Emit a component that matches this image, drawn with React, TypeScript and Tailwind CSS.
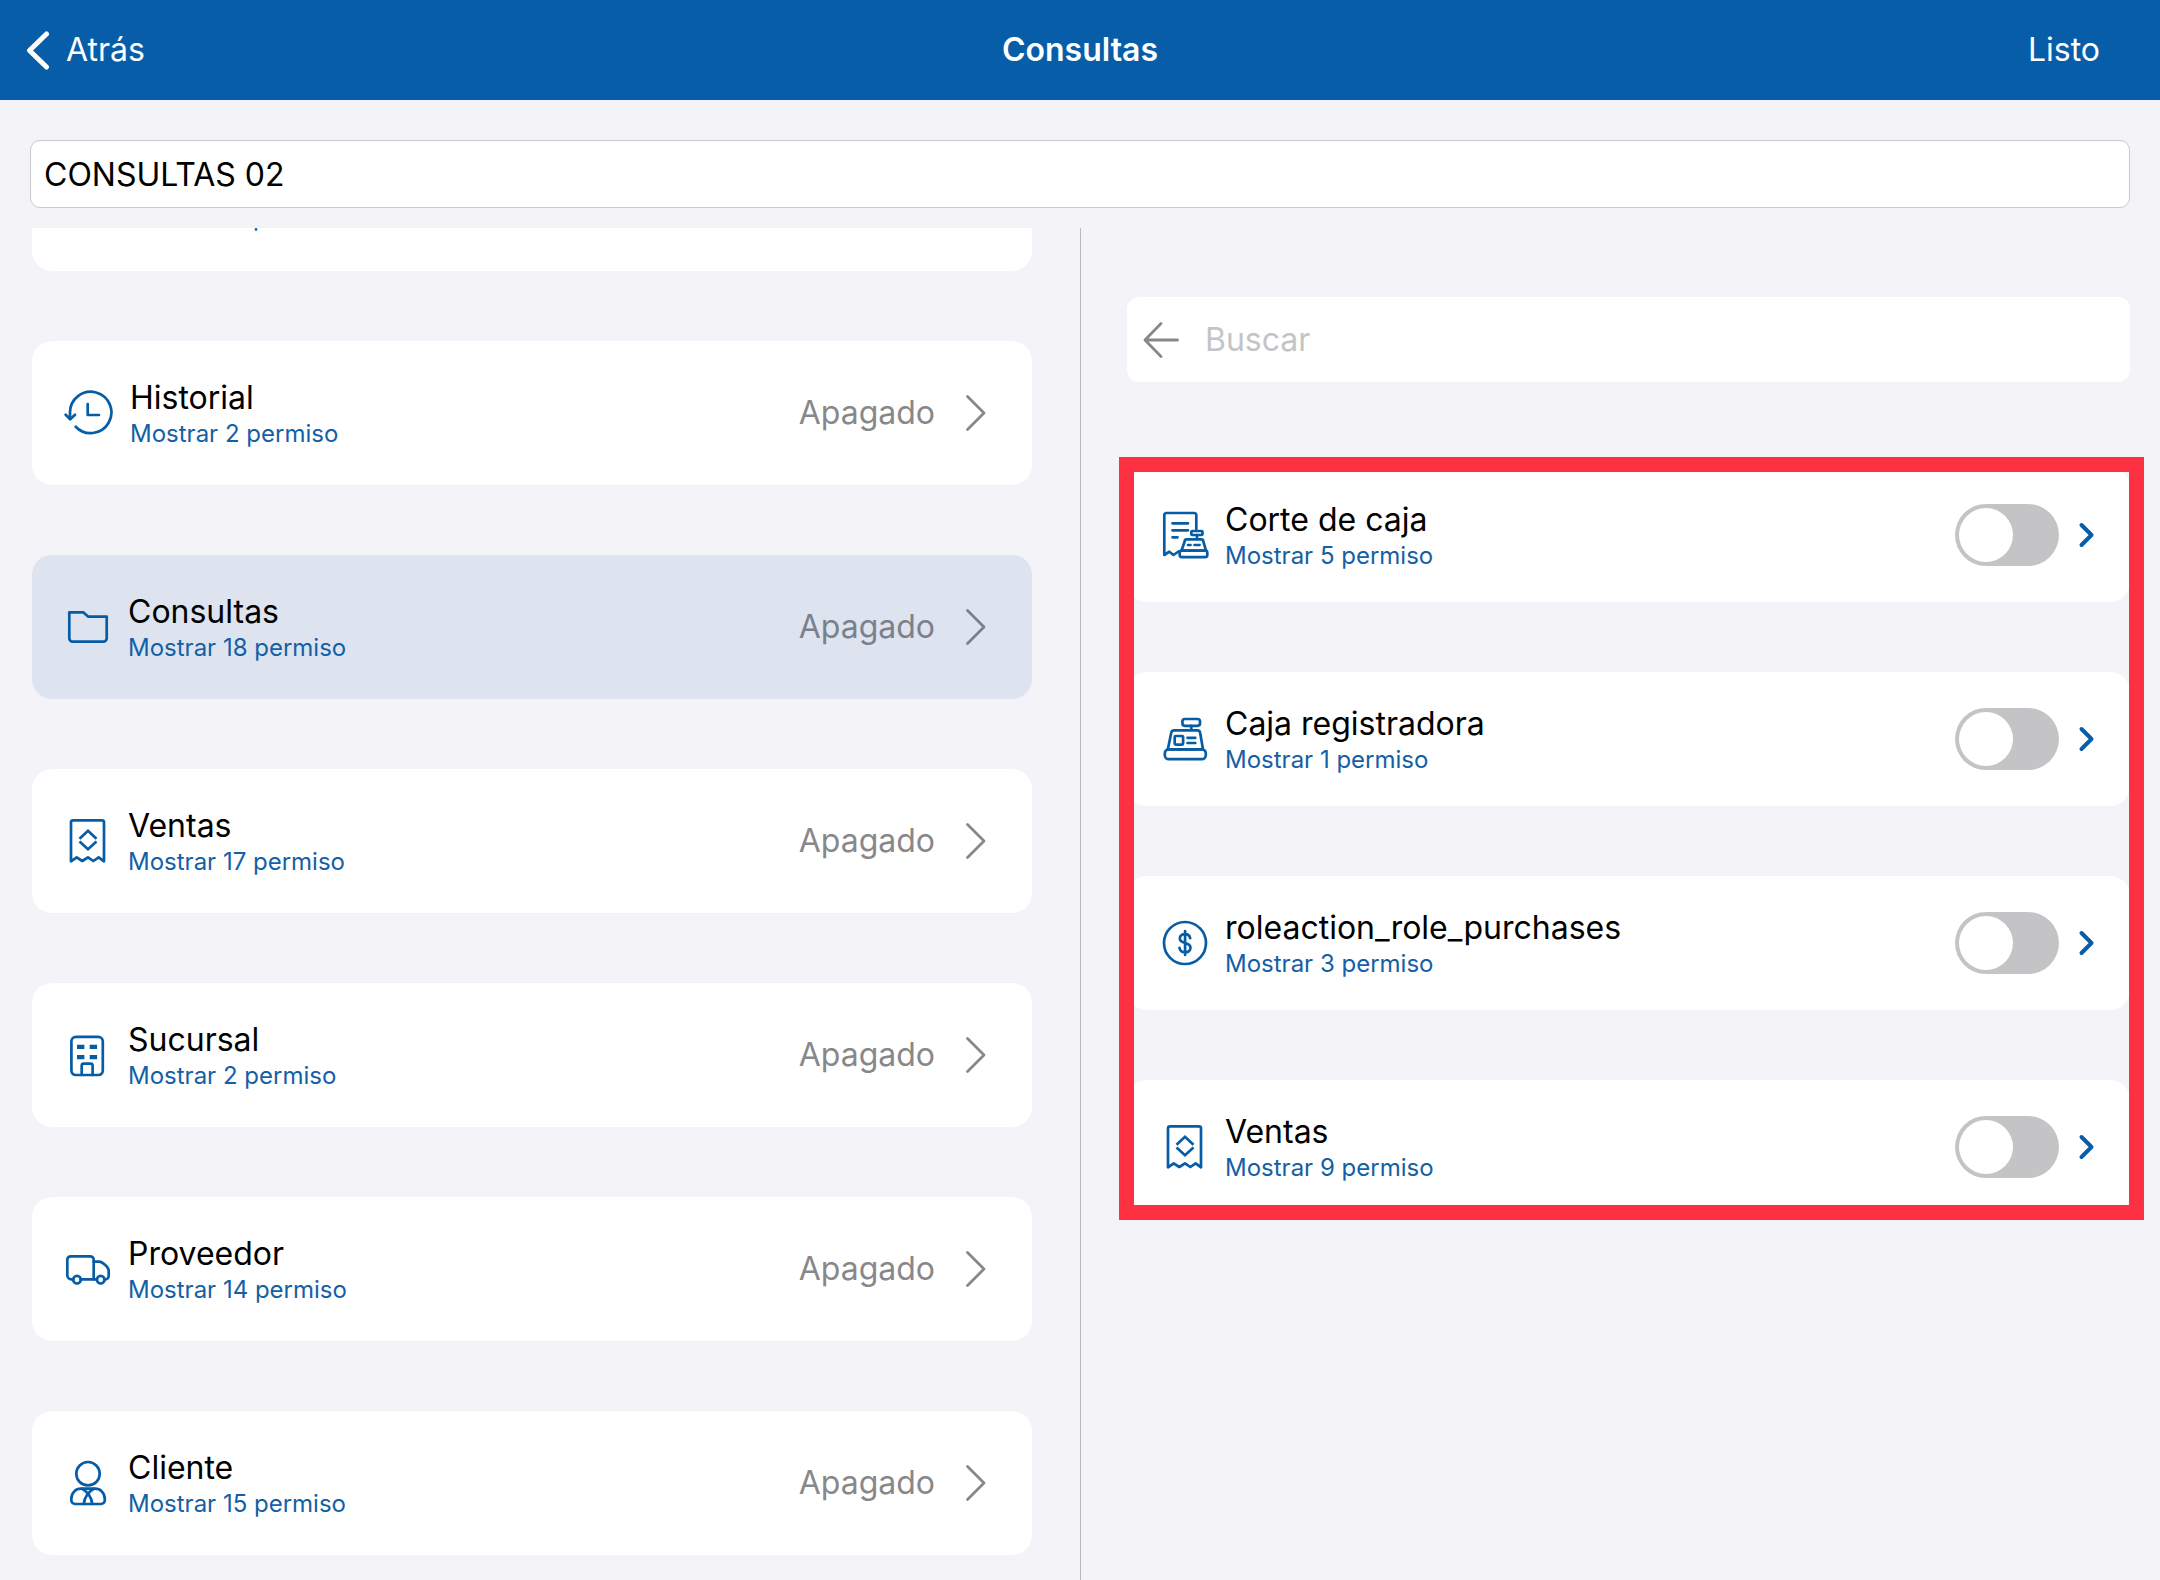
import { useState } from "react";
import type { ReactNode } from "react";

const icons: Record<string, ReactNode> = {
  history: (
    <>
      <path d="M6 30V23.7A20.7 20.7 0 1 1 11.7 37.7" />
      <path d="M1.7 25.7 6.2 30.3 11 25.7" />
      <path d="M23.7 15V26H35" />
    </>
  ),
  folder: <path d="M5.3 9.3H19.3L24 13.6H42.7V35.2A3.5 3.5 0 0 1 39.2 38.7H8.8A3.5 3.5 0 0 1 5.3 35.2Z" />,
  receipt: (
    <>
      <path d="M7 44.3V5.3A2 2 0 0 1 9 3.3H38A2 2 0 0 1 40 5.3V44.3L34.7 40.3 29.3 44 24 40.3 18.3 44 12.7 40.3Z" />
      <path d="M15.5 21.8 24 13.8 32.5 21.8M15.5 24.4 24 32.2 32.5 24.4" strokeLinecap="butt" strokeLinejoin="miter" />
    </>
  ),
  building: (
    <>
      <rect x="7.4" y="5.8" width="31.4" height="38.2" rx="4.5" />
      <path d="M17.7 44V34.7A2 2 0 0 1 19.7 32.7H26.6A2 2 0 0 1 28.6 34.7V44" />
      <path
        d="M13 13.8H20.4V18H13ZM25.7 13.8H33.1V18H25.7ZM13 24H20.4V28.2H13ZM25.7 24H33.1V28.2H25.7Z"
        fill="currentColor"
        stroke="none"
      />
    </>
  ),
  truck: (
    <>
      <path d="M9.3 34.3H7.3A4 4 0 0 1 3.3 30.3V14.8A3.5 3.5 0 0 1 6.8 11.3H26.2A3.5 3.5 0 0 1 29.7 14.8V34.3" />
      <path d="M16.7 34.3H33M29.7 16.7H35.2C38 16.7 44.7 22 44.7 25.5V31A3.3 3.3 0 0 1 41.4 34.3H40.4" />
      <circle cx="13" cy="34.7" r="3.8" />
      <circle cx="36.7" cy="34.7" r="3.8" />
    </>
  ),
  person: (
    <>
      <circle cx="24" cy="14.7" r="11.7" />
      <path d="M17 29.7H31C36.5 29.7 40.8 34 40.8 40V41.3A3.7 3.7 0 0 1 37.1 45H11A3.7 3.7 0 0 1 7.3 41.3V40C7.3 34 11.5 29.7 17 29.7Z" />
      <path d="M18 29.7C23 32 27.5 38 28.3 45M30 29.7C25 32 20.5 38 19.7 45" />
    </>
  ),
  cashCut: (
    <>
      <path d="M35.3 18V4A2 2 0 0 0 33.3 2H5.3A2 2 0 0 0 3.3 4V44L8.3 40.7 12.5 44 17.5 40.5" />
      <path d="M11.5 12.3H27M11.5 19.3H27M11.5 26.3H16.5" />
      <rect x="30.3" y="20" width="11.2" height="4" rx="1" />
      <path d="M36 24V28.3M23.7 30.3A2 2 0 0 1 25.7 28.3H40.3A2 2 0 0 1 42.3 30.3L45 39.7H20.5Z" />
      <rect x="18.7" y="39.7" width="27.6" height="6.4" rx="2" />
      <path d="M27 34H29.5M33.5 34H38.5" />
    </>
  ),
  register: (
    <>
      <rect x="21.4" y="4" width="17.6" height="6.8" rx="2.5" />
      <path d="M30.3 10.8V15.4M10.2 18A3 3 0 0 1 13.2 15.4H36.4A3 3 0 0 1 39.2 18L42 34.4H6.8Z" />
      <rect x="3.8" y="34.4" width="41" height="9.8" rx="4" />
      <rect x="13.7" y="21" width="8.4" height="8.6" rx="1" />
      <path d="M26.5 22.8H34.3M26.5 28H34.3" />
    </>
  ),
  dollar: (
    <>
      <circle cx="24" cy="24" r="21" />
      <path d="M29.2 19.2C28.6 16.6 26.6 15.2 24.1 15.2C21 15.2 18.8 16.9 18.8 19.5C18.8 22.2 21 23.2 24.1 24C27.3 24.8 29.5 26 29.5 28.8C29.5 31.6 27.2 33.3 24.1 33.3C21.1 33.3 18.9 31.6 18.5 28.9M24.1 12V36" />
    </>
  ),
};

function Icon({ name, wide }: { name: string; wide?: boolean }) {
  return (
    <svg
      viewBox={wide ? "0 0 50 48" : "0 0 48 48"}
      className={`h-12 shrink-0 text-[#075ca6] ${wide ? "w-[50px]" : "w-12"}`}
      fill="none"
      stroke="currentColor"
      strokeWidth="2.7"
      strokeLinecap="round"
      strokeLinejoin="round"
      aria-hidden="true"
    >
      {icons[name]}
    </svg>
  );
}

const modules = [
  { title: "Historial", count: 2, icon: "history" },
  { title: "Consultas", count: 18, icon: "folder" },
  { title: "Ventas", count: 17, icon: "receipt" },
  { title: "Sucursal", count: 2, icon: "building" },
  { title: "Proveedor", count: 14, icon: "truck" },
  { title: "Cliente", count: 15, icon: "person" },
];

const permissions = [
  { id: "corte", title: "Corte de caja", count: 5, icon: "cashCut" },
  { id: "caja", title: "Caja registradora", count: 1, icon: "register" },
  { id: "compras", title: "roleaction_role_purchases", count: 3, icon: "dollar" },
  { id: "ventas", title: "Ventas", count: 9, icon: "receipt" },
];

function Labels({ title, count }: { title: string; count: number }) {
  return (
    <span className="flex flex-col">
      <span className="text-[32px] leading-[42px] text-black">{title}</span>
      <span className="text-2xl leading-[30px] text-[#1460a6]">Mostrar {count} permiso</span>
    </span>
  );
}

export default function App() {
  const [selected, setSelected] = useState("Consultas");
  const [name, setName] = useState("CONSULTAS 02");

  return (
    <div className="flex min-h-screen flex-col bg-[#f3f3f8] font-['Inter',sans-serif] text-[32px] leading-[40px]">
      <header className="grid h-[100px] grid-cols-3 items-center bg-[#085da8] pr-[60px] pl-6 text-white">
        <button className="flex items-center gap-[14px] justify-self-start">
          <svg viewBox="0 0 28 40" className="h-10 w-7" fill="none" stroke="currentColor" strokeWidth="5" strokeLinecap="round" strokeLinejoin="round" aria-hidden="true">
            <path d="M22.5 4 5.5 20.5 22.5 37" />
          </svg>
          Atrás
        </button>
        <h1 className="justify-self-center pl-9 font-semibold">Consultas</h1>
        <button className="justify-self-end">Listo</button>
      </header>

      <div className="px-[30px] pt-10 pb-5">
        <input
          aria-label="Nombre"
          value={name}
          onChange={(e) => setName(e.target.value)}
          className="block h-[68px] w-full rounded-[10px] border border-[#c9c9ce] bg-white px-[13px] text-black outline-none"
        />
      </div>

      <main className="grid grow grid-cols-2">
        <section className="flex flex-col gap-[70px] pr-12 pb-6 pl-8">
          <div className="h-[43px] overflow-hidden rounded-b-[20px] bg-white pl-24">
            <p className="-mt-[25px] text-2xl leading-[30px] text-[#1460a6]">Mostrar 17 permiso</p>
          </div>
          {modules.map((m) => (
            <button
              key={m.title}
              onClick={() => setSelected(m.title)}
              className={`flex h-36 items-center gap-4 rounded-[20px] pr-[45px] pl-8 text-left ${
                selected === m.title ? "bg-[#dde4f0] text-[#7b818b]" : "bg-white text-[#88888a]"
              }`}
            >
              <Icon name={m.icon} wide={m.icon === "history"} />
              <Labels title={m.title} count={m.count} />
              <span className="ml-auto">Apagado</span>
              <svg viewBox="0 0 22 40" className="ml-[14px] h-10 w-[22px]" fill="none" stroke="currentColor" strokeWidth="2.8" strokeLinecap="round" strokeLinejoin="round" aria-hidden="true">
                <path d="M2.5 3.5 19 20 2.5 36.5" />
              </svg>
            </button>
          ))}
        </section>

        <section className="border-l border-[#b9b9be] pt-[69px] pr-[30px] pl-[46px]">
          <div className="flex h-[85px] items-center rounded-[12px] bg-white pr-4 pl-4">
            <button aria-label="Volver" className="text-[#88888a]">
              <svg viewBox="0 0 38 38" className="h-[38px] w-[38px]" fill="none" stroke="currentColor" strokeWidth="2.8" strokeLinecap="round" strokeLinejoin="round" aria-hidden="true">
                <path d="M18 2.5 2 19 18 35.5M2 19H34.5" />
              </svg>
            </button>
            <input
              type="search"
              aria-label="Buscar"
              placeholder="Buscar"
              className="ml-6 min-w-0 grow bg-transparent text-black outline-none placeholder:text-[#c4c4c6]"
            />
          </div>

          <div className="relative mt-[86px] flex flex-col gap-[70px]">
            {permissions.map((p) => (
              <div key={p.id} className="flex h-[134px] items-center rounded-[20px] bg-white pr-[35px] pl-[34px]">
                <label htmlFor={p.id} className="flex items-center gap-4">
                  <Icon name={p.icon} />
                  <Labels title={p.title} count={p.count} />
                </label>
                <input
                  id={p.id}
                  type="checkbox"
                  role="switch"
                  className="ml-auto h-[62px] w-[104px] appearance-none rounded-full bg-[#c4c4c6] p-1 before:block before:h-[54px] before:w-[54px] before:rounded-full before:bg-white checked:bg-[#085da8] checked:before:ml-[42px]"
                />
                <button aria-label={`Abrir ${p.title}`} className="ml-[18px] text-[#085da8]">
                  <svg viewBox="0 0 18 28" className="h-7 w-[18px]" fill="none" stroke="currentColor" strokeWidth="4" strokeLinecap="round" strokeLinejoin="round" aria-hidden="true">
                    <path d="M4.5 4 14.5 14 4.5 24" />
                  </svg>
                </button>
              </div>
            ))}
            <div className="pointer-events-none absolute -top-[11px] -right-[14px] -bottom-[6px] -left-2 border-[15px] border-[#fd3142]" />
          </div>
        </section>
      </main>
    </div>
  );
}
